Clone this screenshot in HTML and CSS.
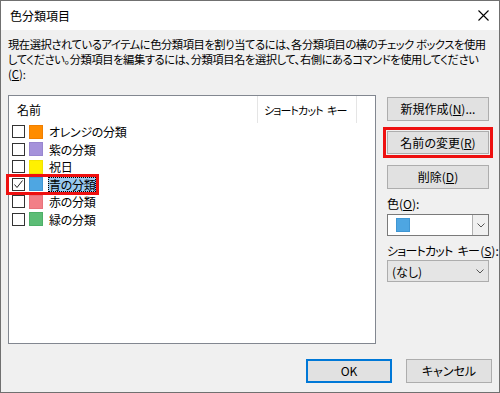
FILE: index.html
```html
<!DOCTYPE html>
<html lang="ja">
<head>
<meta charset="utf-8">
<link rel="stylesheet" href="styles.css">
</head>
<body>
<div class="window">
  <div class="titlebar">
    <span class="title">色分類項目</span>
    <svg class="close" width="11" height="11" viewBox="0 0 11 11"><path d="M0.5 0.5 L10.5 10.5 M10.5 0.5 L0.5 10.5" stroke="#000" stroke-width="1.1" fill="none"/></svg>
  </div>
  <div class="content">
    <p class="desc"><span class="line">現在選択されているアイテムに色分類項目を割り当てるには、各分類項目の横のチェック ボックスを使用</span><span class="line">してください。分類項目を編集するには、分類項目名を選択して、右側にあるコマンドを使用してください</span><span class="line short">(<u>C</u>):</span></p>
    <div class="main">
      <div class="listbox">
        <div class="header">
          <span class="col-name">名前</span>
          <span class="col-key">ショートカット キー</span>
          <span class="col-rest"></span>
        </div>
        <div class="row"><span class="cb"></span><span class="sw orange"></span><span class="label">オレンジの分類</span></div>
        <div class="row"><span class="cb"></span><span class="sw purple"></span><span class="label">紫の分類</span></div>
        <div class="row"><span class="cb"></span><span class="sw yellow"></span><span class="label">祝日</span></div>
        <div class="row selected">
          <span class="cb checked"><svg width="11" height="11" viewBox="0 0 11 11"><path d="M1.5 5.5 L4 8.5 L9.5 1.5" stroke="#222" stroke-width="1" fill="none"/></svg></span><span class="sw blue"></span><span class="label sel">青の分類</span>
          <span class="annot-row"></span>
        </div>
        <div class="row"><span class="cb"></span><span class="sw pink"></span><span class="label">赤の分類</span></div>
        <div class="row"><span class="cb"></span><span class="sw green"></span><span class="label">緑の分類</span></div>
      </div>
      <div class="side">
        <button class="btn">新規作成(<u>N</u>)...</button>
        <button class="btn annot">名前の変更(<u>R</u>)</button>
        <button class="btn">削除(<u>D</u>)</button>
        <div class="lbl">色(<u>O</u>):</div>
        <div class="combo color">
          <span class="combo-val"><span class="sw blue big"></span></span>
          <span class="combo-arrow"><svg width="8" height="5" viewBox="0 0 8 5"><path d="M0.5 0.5 L4 4 L7.5 0.5" stroke="#555" fill="none"/></svg></span>
        </div>
        <div class="lbl lbl2"><span class="tight">ショートカット キー</span>(<u>S</u>):</div>
        <div class="combo key">
          <span class="combo-val">(なし)</span>
          <span class="combo-arrow plain"><svg width="8" height="5" viewBox="0 0 8 5"><path d="M0.5 0.5 L4 4 L7.5 0.5" stroke="#555" fill="none"/></svg></span>
        </div>
      </div>
    </div>
    <div class="footer">
      <button class="btn fbtn default">OK</button>
      <button class="btn fbtn">キャンセル</button>
    </div>
  </div>
</div>
</body>
</html>
```

FILE: styles.css
```css
* { box-sizing: border-box; }
html, body { margin: 0; padding: 0; }
body {
  font-family: "Noto Sans CJK JP", "Noto Sans", sans-serif;
  font-feature-settings: "palt";
  font-size: 12px;
  color: #000;
  background: #fff;
}
u { text-decoration: underline; text-underline-offset: 1px; }
.window {
  width: 500px;
  height: 393px;
  border: 1px solid #707070;
  background: #f0f0f0;
  display: flex;
  flex-direction: column;
}
.titlebar {
  height: 29px;
  background: #fff;
  display: flex;
  align-items: center;
  justify-content: space-between;
  padding: 0 10px 0 9px;
  flex: none;
}
.title { font-size: 12px; line-height: 14px; }
.close { display: block; }
.content {
  flex: 1;
  display: flex;
  flex-direction: column;
  padding: 7px 0 0 7px;
}
.desc {
  margin: 0;
  line-height: 15px;
  font-size: 11.3px;
  letter-spacing: -0.45px;
}
.desc .line { display: block; white-space: nowrap; }
.desc .line.short { letter-spacing: 0; }
.main {
  display: flex;
  margin-top: 13px;
}
.listbox {
  width: 368px;
  height: 249px;
  background: #fff;
  border: 1px solid #828790;
  flex: none;
  padding-left: 3px;
}
.header {
  display: flex;
  height: 27px;
  margin-left: -3px;
}
.header span { display: flex; align-items: center; white-space: pre; }
.col-name { width: 249px; padding-left: 8px; border-right: 1px solid #e5e5e5; }
.col-key { width: 99px; padding-left: 6px; border-right: 1px solid #e5e5e5; font-size: 11px; letter-spacing: -0.9px; word-spacing: 3px; }
.col-rest { flex: 1; }
.row {
  display: flex;
  align-items: center;
  height: 17.5px;
  position: relative;
}
.cb {
  width: 13px;
  height: 13px;
  border: 1px solid #333;
  background: #fff;
  flex: none;
  display: flex;
  align-items: center;
  justify-content: center;
}
.sw {
  width: 14px;
  height: 14px;
  margin-left: 4px;
  flex: none;
  display: inline-block;
}
.orange { background: #ff8c00; border: 1px solid #f07f00; }
.purple { background: #a592db; border: 1px solid #9886cf; }
.yellow { background: #fff100; border: 1px solid #f2e300; }
.blue { background: #4ea6e2; border: 1px solid #3f96d3; }
.pink { background: #f27f87; border: 1px solid #e8727b; }
.green { background: #5cbd76; border: 1px solid #4daf68; }
.label { margin-left: 5px; line-height: 15px; padding: 0 1px; white-space: nowrap; letter-spacing: -0.3px; }
.label.sel {
  background: #99c9ef;
  outline: 1px dotted #000;
  outline-offset: -1px;
}
.annot-row {
  position: absolute;
  left: -6px;
  top: -2px;
  width: 93px;
  height: 21px;
  border: 3px solid #ee1010;
  pointer-events: none;
}
.side {
  display: flex;
  flex-direction: column;
  margin-left: 11px;
  width: 102px;
  padding-top: 2px;
}
.btn {
  font: inherit;
  font-feature-settings: "palt";
  color: #000;
  background: #e1e1e1;
  border: 1px solid #adadad;
  height: 24px;
  width: 102px;
  padding: 0;
  margin: 0 0 10px 0;
  line-height: 14px;
  white-space: nowrap;
}
.btn.annot {
  height: 23px;
  outline: 3px solid #ee1010;
  outline-offset: 1px;
  margin-bottom: 11px;
}
.lbl { line-height: 14px; margin-top: -2px; height: 17px; white-space: nowrap; }
.lbl2 { margin-top: 8px; height: 16px; }
.tight { letter-spacing: -0.75px; word-spacing: 3px; margin-right: 1px; }
.combo {
  display: flex;
  height: 22px;
  width: 102px;
  border: 1px solid #7a7a7a;
  background: #fff;
}
.combo-val { flex: 1; display: flex; align-items: center; padding-left: 8px; white-space: nowrap; }
.sw.big { margin-left: 0; width: 14px; height: 14px; }
.combo-arrow {
  width: 16px;
  display: flex;
  align-items: center;
  justify-content: center;
  border-left: 1px solid #b0b0b0;
  background: #f0f0f0;
}
.combo-arrow svg { display: block; }
.combo.key { background: #e5e5e5; border-color: #adadad; }
.combo.key .combo-val { padding-left: 4px; }
.combo-arrow.plain { border-left: none; background: transparent; }
.footer {
  display: flex;
  justify-content: flex-end;
  gap: 14px;
  padding-right: 7px;
  margin-top: 15px;
}
.fbtn { width: 86px; height: 24px; margin: 0; }
.fbtn.default { border: 2px solid #0078d7; }
```
